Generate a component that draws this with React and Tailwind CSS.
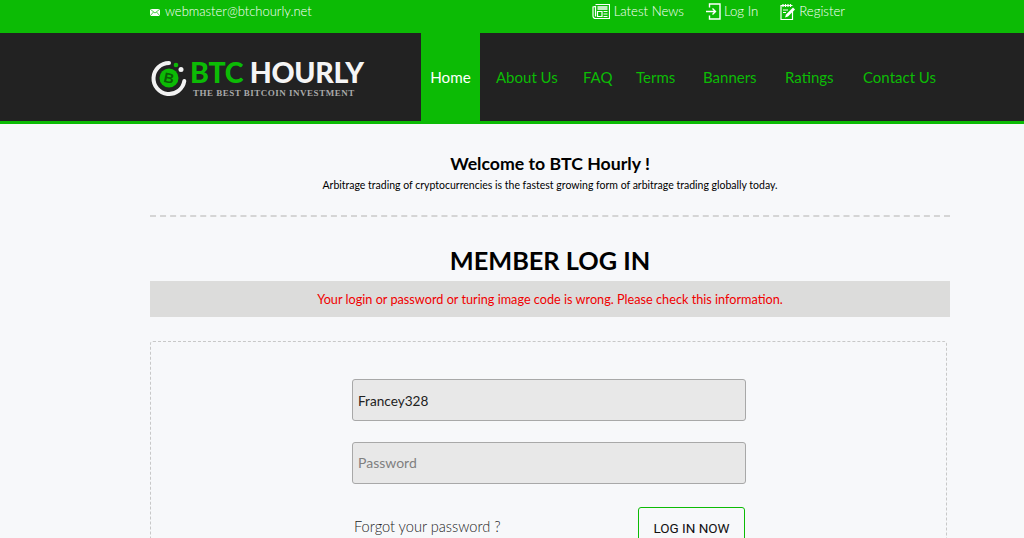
import React from 'react';

const font = "font-['Lato','Noto_Sans',sans-serif]";

const navItems = [
  { label: 'About Us', width: 'w-[61px]' },
  { label: 'FAQ', width: 'w-[27px]' },
  { label: 'Terms', width: 'w-[41px]' },
  { label: 'Banners', width: 'w-[56px]' },
  { label: 'Ratings', width: 'w-[52px]' },
  { label: 'Contact Us', width: 'w-[74px]' },
];

const NewsIcon = () => (
  <svg width="18" height="17" viewBox="0 0 18 17" fill="none" stroke="white" strokeWidth="1.2">
    <path d="M3.500 1.500h14v14H3.500a2.500 2.500 0 0 1-2.500-2.500V4l2.500-.5v10" />
    <path d="M5.500 4h10M5.500 6h10" strokeWidth="1.300" />
    <path d="M5.500 8.500h4.500v5H5.500zM11.500 8.500h4M11.500 11h4M11.500 13.500h4" />
  </svg>
);

const LoginIcon = () => (
  <svg width="15" height="17" viewBox="0 0 15 17" fill="none" stroke="white" strokeWidth="1.4">
    <path d="M3.500 4.500V1h10.500v15H3.500v-3.500" />
    <path d="M0 8.500h9M6.500 5.500l3 3-3 3" />
  </svg>
);

const RegisterIcon = () => (
  <svg width="16" height="18" viewBox="0 0 16 18" fill="none" stroke="white" strokeWidth="1.2">
    <path d="M12.500 8v8.500H1V2.500h11.500" />
    <path d="M3 1v3M5.500 1v3M8 1v3M10.500 1v3" />
    <path d="M3 7h5M3 9.500h3" />
    <path d="M5 14.500l1-3 7-7 2 2-7 7z" fill="white" stroke="none" />
  </svg>
);

const Logo = () => (
  <div className="flex items-start gap-[2px]">
    <svg width="38" height="38" viewBox="0 0 38 38" fill="none" className="shrink-0">
      <path d="M19 4A15.500 15.500 0 1 0 34.300 22" stroke="#f2f2f2" strokeWidth="4" strokeLinecap="round" />
      <circle cx="19" cy="19" r="9.500" fill="#0cbb05" />
      <circle cx="26" cy="6" r="2.300" fill="#0cbb05" />
      <circle cx="31" cy="10.500" r="2.500" fill="#f2f2f2" />
      <text x="19" y="24" textAnchor="middle" fontSize="14" fontWeight="700" fill="#0a5c06" fontFamily="Liberation Sans, sans-serif" transform="rotate(12 19 19)">B</text>
    </svg>
    <div className="flex flex-col items-start -mt-[1px]">
      <div className={`${font} text-[28.500px] leading-[28px] font-black tracking-[-0.3px] whitespace-nowrap`}>
        <span className="text-[#0cbb05]">BTC</span> <span className="text-[#f5f5f5]">HOURLY</span>
      </div>
      <div className="font-['Liberation_Serif',serif] text-[9px] leading-[10px] font-bold tracking-[0.5px] text-[#a9a9a9] pl-[3px] mt-[2px] whitespace-nowrap">
        THE BEST BITCOIN INVESTMENT
      </div>
    </div>
  </div>
);

export default function App() {
  return (
    <div className={`${font} h-[538px] overflow-hidden bg-[#f7f8fa] text-black`}>
      <div className="h-[33px] bg-[#0cbb05]">
        <div className="w-[800px] ml-[150px] h-full flex items-center justify-between pb-[9px]">
          <div className="flex items-center gap-[5px] text-white text-[13px] font-light">
            <svg width="10" height="7" viewBox="0 0 10 7">
              <rect width="10" height="7" fill="white" />
              <path d="M0 0l5 4 5-4M0 7l3.500-4M10 7L6.500 3" stroke="#0cbb05" strokeWidth="0.7" fill="none" />
            </svg>
            <span>webmaster@btchourly.net</span>
          </div>
          <div className="flex items-center text-white text-[13.200px] font-light mr-[105px]">
            <NewsIcon />
            <span className="ml-[4px] mr-[22px]">Latest News</span>
            <LoginIcon />
            <span className="ml-[3px] mr-[22px]">Log In</span>
            <RegisterIcon />
            <span className="ml-[3px]">Register</span>
          </div>
        </div>
      </div>

      <div className="h-[91px] bg-[#222222] border-b-[3px] border-[#0cbb05]">
        <div className="w-[800px] ml-[150px] h-full flex">
          <div className="w-[271px] shrink-0 flex items-center pt-[2px]">
            <Logo />
          </div>
          <div className="w-[59px] shrink-0 bg-[#0cbb05] text-white text-[15.200px] flex items-center justify-center">Home</div>
          <div className="flex items-center gap-[26px] ml-[16px] text-[#0cbb05] text-[15px]">
            {navItems.map((item) => (
              <span key={item.label} className={`${item.width} whitespace-nowrap`}>{item.label}</span>
            ))}
          </div>
        </div>
      </div>

      <div className="w-[800px] ml-[150px]">
        <div className="pt-[28px] text-center">
          <h2 className="text-[17.700px] leading-[24px] font-bold">Welcome to BTC Hourly !</h2>
          <p className="text-[10.500px] leading-[14px] mt-[2px]">
            Arbitrage trading of cryptocurrencies is the fastest growing form of arbitrage trading globally today.
          </p>
        </div>
        <div className="mt-[23px] border-t-2 border-dashed border-[#d5d5d5]" />
        <h1 className="mt-[25px] text-[25.300px] leading-[36px] font-bold text-center">MEMBER LOG IN</h1>
        <div className="h-[36px] mt-[3px] pt-[1px] bg-[#dcdcdb] flex items-center justify-center text-[#f00000] text-[12.700px]">
          Your login or password or turing image code is wrong. Please check this information.
        </div>
        <div className="mt-[24px] w-[797px] h-[300px] border border-dashed border-[#c8c8c8] rounded-[3px] pt-[37px] pl-[201px]">
          <input
            readOnly
            value="Francey328"
            className="block w-[394px] h-[42px] px-[5px] pt-[2px] bg-[#e8e8e8] border border-[#a8a8a8] rounded-[3px] text-[13.600px] text-[#222] outline-none"
          />
          <input
            readOnly
            placeholder="Password"
            className="block mt-[21px] w-[394px] h-[42px] px-[5px] pb-[2px] bg-[#e8e8e8] border border-[#a8a8a8] rounded-[3px] text-[14px] placeholder:text-[#808080] outline-none"
          />
          <div className="mt-[23px] w-[393px] flex items-center justify-between pl-[2px]">
            <span className="text-[14.600px] font-light text-[#222]">Forgot your password ?</span>
            <button className="w-[107px] h-[40px] pt-[2px] border border-[#0cbb05] rounded-[3px] font-['Roboto',sans-serif] text-[13.500px] text-[#111]">
              LOG IN NOW
            </button>
          </div>
        </div>
      </div>
    </div>
  );
}
